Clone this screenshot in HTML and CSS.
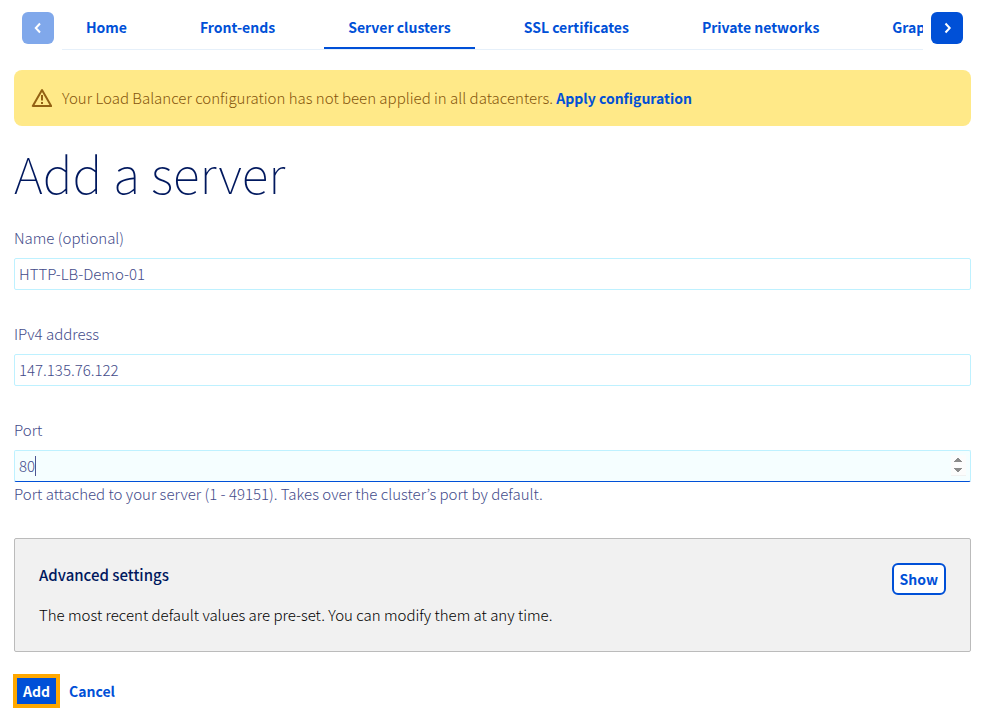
FILE: index.html
```html
<!DOCTYPE html>
<html lang="en">
<head>
    <meta charset="UTF-8">
    <meta name="viewport" content="width=device-width, initial-scale=1.0">
    <title>Add a server</title>
    <link rel="stylesheet" href="styles.css">
</head>
<body>
    <nav class="tabs">
        <button type="button" class="tabs-arrow" aria-label="Previous tabs" disabled>
            <svg width="16" height="16" viewBox="0 0 16 16"><path d="M10 3.5 5.8 8l4.2 4.5"/></svg>
        </button>
        <div class="tabs-list">
            <a class="tab" href="#">Home</a>
            <a class="tab" href="#">Front-ends</a>
            <a class="tab active" href="#">Server clusters</a>
            <a class="tab" href="#">SSL certificates</a>
            <a class="tab" href="#">Private networks</a>
            <a class="tab" href="#">Graphs</a>
        </div>
        <button type="button" class="tabs-arrow" aria-label="Next tabs">
            <svg width="16" height="16" viewBox="0 0 16 16"><path d="M6.5 3.5 10.7 8l-4.2 4.5"/></svg>
        </button>
    </nav>

    <main>
        <div class="alert">
            <svg class="alert-icon" width="22" height="20" viewBox="-1 0 22 20">
                <path d="M11 2 1.8 18h18.4z"/>
                <path d="M11 7v5.500M11 14v2"/>
            </svg>
            <p>Your Load Balancer configuration has not been applied in all datacenters. <a href="#">Apply configuration</a></p>
        </div>

        <h1>Add a server</h1>

        <form>
            <div class="field">
                <label for="name">Name (optional)</label>
                <input type="text" id="name" value="HTTP-LB-Demo-01">
            </div>
            <div class="field">
                <label for="address">IPv4 address</label>
                <input type="text" id="address" value="147.135.76.122">
            </div>
            <div class="field">
                <label for="port">Port</label>
                <input type="number" id="port" class="current" min="1" max="49151" value="80" aria-describedby="port-help" autofocus>
                <p class="help" id="port-help">Port attached to your server (1 - 49151). Takes over the cluster’s port by default.</p>
            </div>

            <section class="advanced">
                <div>
                    <h2>Advanced settings</h2>
                    <p>The most recent default values are pre-set. You can modify them at any time.</p>
                </div>
                <button type="button" class="show">Show</button>
            </section>

            <div class="actions">
                <button type="submit" class="add">Add</button>
                <a href="#">Cancel</a>
            </div>
        </form>
    </main>
</body>
</html>
```

FILE: styles.css
```css
* {
    box-sizing: border-box;
}
body {
    margin: 0;
    padding: 8px 12px 5px 14px;
    font-family: "Noto Sans CJK KR", "Noto Sans", sans-serif;
    font-size: 15px;
    font-weight: 300;
    line-height: 24px;
    color: #434b8a;
    background-color: #ffffff;
}
h1, h2, p {
    margin: 0;
}
a {
    color: #0050d7;
    font-size: 14px;
    font-weight: bold;
    text-decoration: none;
}
a:hover {
    text-decoration: underline;
}
button, input {
    font: inherit;
}

/* Tabs */
.tabs {
    display: flex;
    gap: 8px;
    padding: 0 8px;
}
.tabs-arrow {
    display: flex;
    align-items: center;
    justify-content: center;
    flex: none;
    width: 32px;
    height: 32px;
    margin-top: 4px;
    padding: 0;
    border: 0;
    border-radius: 6px;
    background-color: #0050d7;
}
.tabs-arrow:disabled {
    background-color: #80a8eb;
}
.tabs-arrow path {
    fill: none;
    stroke: #ffffff;
    stroke-width: 2;
}
.tabs-list {
    display: flex;
    flex: 1;
    gap: 25px;
    min-width: 0;
    height: 42px;
    overflow: hidden;
    border-bottom: 1px solid #e6f0fa;
}
.tab {
    flex: none;
    padding: 7px 24px 8px;
    border-bottom: 2px solid transparent;
}
.tab.active {
    border-color: #0050d7;
}

/* Alert */
.alert {
    display: flex;
    align-items: center;
    gap: 10px;
    margin-top: 20px;
    padding: 16px;
    border-radius: 8px;
    color: #85550c;
    background-color: #ffe988;
}
.alert-icon {
    flex: none;
    fill: none;
    stroke: #936113;
    stroke-width: 2;
    stroke-linejoin: round;
}

h1 {
    margin-top: 12px;
    font-size: 50px;
    font-weight: 100;
    line-height: 68px;
    color: #00185e;
}

/* Form */
.field {
    margin-top: 32px;
}
h1 + form .field:first-child {
    margin-top: 20px;
}
.field label {
    display: block;
    margin-bottom: 8px;
}
.field input {
    display: block;
    width: 100%;
    height: 32px;
    padding: 0 4px 2px;
    border: 1px solid #bef1ff;
    border-radius: 2px;
    outline: 0;
    color: #434b8a;
    background-color: #ffffff;
}
/* the caret and the spinner's plate are drawn as backgrounds */
.field input.current {
    border-bottom-color: #0050d7;
    caret-color: transparent;
    background:
        linear-gradient(#4d5592, #4d5592) 20px 5px / 1px 20px no-repeat,
        linear-gradient(#f1f1f1, #f1f1f1) right 4px center / 15px 20px no-repeat,
        #f5feff;
}
.current::-webkit-inner-spin-button {
    opacity: 1;
}
.advanced {
    display: flex;
    align-items: flex-start;
    justify-content: space-between;
    margin-top: 32px;
    padding: 24px;
    border: 1px solid #bbbbbb;
    border-radius: 2px;
    color: #000000;
    background-color: #f1f1f1;
}
.advanced h2 {
    margin-bottom: 16px;
    font-size: 15px;
    font-weight: 500;
    line-height: 24px;
    color: #00185e;
}
.show {
    height: 32px;
    padding: 0 6px;
    border: 2px solid #0050d7;
    border-radius: 6px;
    font-size: 14px;
    font-weight: bold;
    color: #0050d7;
    background-color: #ffffff;
}
.actions {
    display: flex;
    align-items: center;
    gap: 13px;
    margin-top: 26px;
    padding-left: 3px;
}
.add {
    height: 26px;
    padding: 0 6px;
    border: 0;
    outline: 4px solid #ffa800;
    font-size: 14px;
    font-weight: bold;
    line-height: 26px;
    color: #ffffff;
    background-color: #0050d7;
}
```
